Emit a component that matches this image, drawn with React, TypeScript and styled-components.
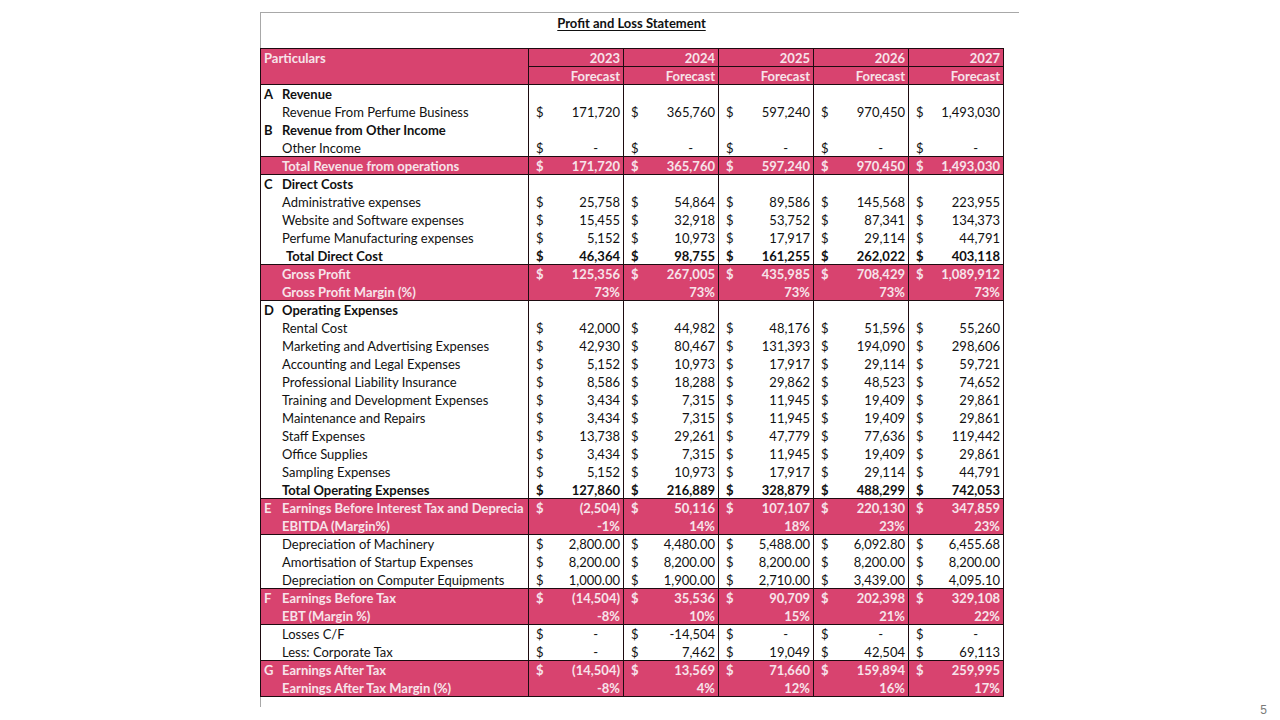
import * as React from "react";
import styled, { createGlobalStyle, css } from "styled-components";

const GlobalStyle = createGlobalStyle`
  html, body {
    margin: 0;
    padding: 0;
    background: #ffffff;
  }
  body {
    font-family: Lato, "Open Sans", "Liberation Sans", sans-serif;
    color: #111111;
  }
`;

const PINK = "#d8436f";
const PINK_TEXT = "#f7e3ea";
const LINE = "#1d0b10";

type Kind = "section" | "item" | "total" | "pink";

interface IRow {
  letter?: string;
  label: string;
  kind: Kind;
  values?: string[];
  dollar?: boolean;
  indent?: boolean;
  bandTop?: boolean;
  bandBottom?: boolean;
}

const YEARS = ["2023", "2024", "2025", "2026", "2027"];

const ROWS: IRow[] = [
  { letter: "A", label: "Revenue", kind: "section" },
  { label: "Revenue From Perfume Business", kind: "item", dollar: true, values: ["171,720", "365,760", "597,240", "970,450", "1,493,030"] },
  { letter: "B", label: "Revenue from Other Income", kind: "section" },
  { label: "Other Income", kind: "item", dollar: true, values: ["-", "-", "-", "-", "-"] },
  { label: "Total Revenue from operations", kind: "pink", dollar: true, bandTop: true, bandBottom: true, values: ["171,720", "365,760", "597,240", "970,450", "1,493,030"] },
  { letter: "C", label: "Direct Costs", kind: "section" },
  { label: "Administrative expenses", kind: "item", dollar: true, values: ["25,758", "54,864", "89,586", "145,568", "223,955"] },
  { label: "Website and Software expenses", kind: "item", dollar: true, values: ["15,455", "32,918", "53,752", "87,341", "134,373"] },
  { label: "Perfume Manufacturing expenses", kind: "item", dollar: true, values: ["5,152", "10,973", "17,917", "29,114", "44,791"] },
  { label: "Total Direct Cost", kind: "total", indent: true, dollar: true, values: ["46,364", "98,755", "161,255", "262,022", "403,118"] },
  { label: "Gross Profit", kind: "pink", dollar: true, bandTop: true, values: ["125,356", "267,005", "435,985", "708,429", "1,089,912"] },
  { label: "Gross Profit Margin (%)", kind: "pink", bandBottom: true, values: ["73%", "73%", "73%", "73%", "73%"] },
  { letter: "D", label: "Operating Expenses", kind: "section" },
  { label: "Rental Cost", kind: "item", dollar: true, values: ["42,000", "44,982", "48,176", "51,596", "55,260"] },
  { label: "Marketing and Advertising Expenses", kind: "item", dollar: true, values: ["42,930", "80,467", "131,393", "194,090", "298,606"] },
  { label: "Accounting and Legal Expenses", kind: "item", dollar: true, values: ["5,152", "10,973", "17,917", "29,114", "59,721"] },
  { label: "Professional Liability Insurance", kind: "item", dollar: true, values: ["8,586", "18,288", "29,862", "48,523", "74,652"] },
  { label: "Training and Development Expenses", kind: "item", dollar: true, values: ["3,434", "7,315", "11,945", "19,409", "29,861"] },
  { label: "Maintenance and Repairs", kind: "item", dollar: true, values: ["3,434", "7,315", "11,945", "19,409", "29,861"] },
  { label: "Staff Expenses", kind: "item", dollar: true, values: ["13,738", "29,261", "47,779", "77,636", "119,442"] },
  { label: "Office Supplies", kind: "item", dollar: true, values: ["3,434", "7,315", "11,945", "19,409", "29,861"] },
  { label: "Sampling Expenses", kind: "item", dollar: true, values: ["5,152", "10,973", "17,917", "29,114", "44,791"] },
  { label: "Total Operating Expenses", kind: "total", dollar: true, values: ["127,860", "216,889", "328,879", "488,299", "742,053"] },
  { letter: "E", label: "Earnings Before Interest Tax and Deprecia", kind: "pink", dollar: true, bandTop: true, values: ["(2,504)", "50,116", "107,107", "220,130", "347,859"] },
  { label: "EBITDA (Margin%)", kind: "pink", bandBottom: true, values: ["-1%", "14%", "18%", "23%", "23%"] },
  { label: "Depreciation of Machinery", kind: "item", dollar: true, values: ["2,800.00", "4,480.00", "5,488.00", "6,092.80", "6,455.68"] },
  { label: "Amortisation of Startup Expenses", kind: "item", dollar: true, values: ["8,200.00", "8,200.00", "8,200.00", "8,200.00", "8,200.00"] },
  { label: "Depreciation on Computer Equipments", kind: "item", dollar: true, values: ["1,000.00", "1,900.00", "2,710.00", "3,439.00", "4,095.10"] },
  { letter: "F", label: "Earnings Before Tax", kind: "pink", dollar: true, bandTop: true, values: ["(14,504)", "35,536", "90,709", "202,398", "329,108"] },
  { label: "EBT (Margin %)", kind: "pink", bandBottom: true, values: ["-8%", "10%", "15%", "21%", "22%"] },
  { label: "Losses C/F", kind: "item", dollar: true, values: ["-", "-14,504", "-", "-", "-"] },
  { label: "Less: Corporate Tax", kind: "item", dollar: true, values: ["-", "7,462", "19,049", "42,504", "69,113"] },
  { letter: "G", label: "Earnings After Tax", kind: "pink", dollar: true, bandTop: true, values: ["(14,504)", "13,569", "71,660", "159,894", "259,995"] },
  { label: "Earnings After Tax Margin (%)", kind: "pink", bandBottom: true, values: ["-8%", "4%", "12%", "16%", "17%"] }
];

const Page = styled.div`
  width: 1280px;
  height: 720px;
  display: grid;
  grid-template-columns: 260px 759px 1fr;
  overflow: hidden;
`;

const Frame = styled.div`
  grid-column: 2;
  margin-top: 12px;
  height: 695px;
  border-top: 1px solid #a8a8a8;
  border-left: 1px solid #a8a8a8;
  box-sizing: border-box;
`;

const TitleBar = styled.div`
  width: 743px;
  height: 35px;
  margin-left: -1px;
  box-sizing: border-box;
  text-align: center;
  line-height: 16px;
  padding-top: 1px;
`;

const Title = styled.span`
  font-size: 13px;
  font-weight: 700;
  text-decoration: underline;
  text-underline-offset: 2px;
  color: #111;
`;

const Sheet = styled.table`
  margin-left: -1px;
  width: 743px;
  border-collapse: collapse;
  table-layout: fixed;
  font-size: 13px;
`;

const Col = styled.col<{ $w: number }>`
  width: ${({ $w }) => $w}px;
`;

const HeadCell = styled.th<{ $left?: boolean }>`
  background: ${PINK};
  color: ${PINK_TEXT};
  font-weight: 700;
  height: 16px;
  line-height: 16px;
  padding: 1px 3px 0;
  text-align: ${({ $left }) => ($left ? "left" : "right")};
  vertical-align: top;
  border: 1px solid ${LINE};
  white-space: nowrap;
`;

const Tr = styled.tr<{ $band?: boolean; $top?: boolean; $bottom?: boolean }>`
  height: 18px;
  ${({ $band }) =>
    $band &&
    css`
      background: ${PINK};
      color: ${PINK_TEXT};
      font-weight: 700;
    `}
  & > td {
    ${({ $top }) => $top && css`border-top: 1px solid ${LINE};`}
    ${({ $bottom }) => $bottom && css`border-bottom: 1px solid ${LINE};`}
  }
`;

const LabelCell = styled.td`
  padding: 1px 0 0 3px;
  line-height: 16px;
  white-space: nowrap;
  overflow: hidden;
  border-left: 1px solid ${LINE};
  border-right: 1px solid ${LINE};
`;

const LabelInner = styled.div`
  display: flex;
  align-items: center;
`;

const Letter = styled.span`
  width: 18px;
  flex: none;
  font-weight: 700;
`;

const Label = styled.span<{ $bold?: boolean; $indent?: boolean }>`
  font-weight: ${({ $bold }) => ($bold ? 700 : "inherit")};
  padding-left: ${({ $indent }) => ($indent ? "4px" : "0")};
`;

const DataCell = styled.td<{ $bold?: boolean }>`
  padding: 1px 3px 0 7px;
  line-height: 16px;
  white-space: nowrap;
  font-weight: ${({ $bold }) => ($bold ? 700 : "inherit")};
  border-left: 1px solid ${LINE};
  border-right: 1px solid ${LINE};
`;

const Amount = styled.div`
  display: flex;
  justify-content: space-between;
`;

const Value = styled.span<{ $dash?: boolean }>`
  margin-left: auto;
  padding-right: ${({ $dash }) => ($dash ? "22px" : "0")};
`;

const PageNumber = styled.div`
  grid-column: 3;
  align-self: end;
  justify-self: end;
  padding: 0 13px 3px 0;
  font-family: "Liberation Sans", Arial, sans-serif;
  font-size: 12px;
  color: #7a7a7a;
`;

const SheetRow = ({ row }: { row: IRow }) => {
  const band = row.kind === "pink";
  const bold = row.kind === "section" || row.kind === "total";
  return (
    <Tr $band={band} $top={row.bandTop} $bottom={row.bandBottom}>
      <LabelCell>
        <LabelInner>
          <Letter>{row.letter ?? ""}</Letter>
          <Label $bold={bold} $indent={row.indent}>
            {row.label}
          </Label>
        </LabelInner>
      </LabelCell>
      {YEARS.map((y, i) => (
        <DataCell key={y} $bold={row.kind === "total"}>
          {row.values ? (
            <Amount>
              {row.dollar && <span>$</span>}
              <Value $dash={row.values[i] === "-"}>{row.values[i]}</Value>
            </Amount>
          ) : null}
        </DataCell>
      ))}
    </Tr>
  );
};

export default function App() {
  return (
    <>
      <GlobalStyle />
      <Page>
        <Frame>
          <TitleBar>
            <Title>Profit and Loss Statement</Title>
          </TitleBar>
          <Sheet>
            <colgroup>
              <Col $w={268} />
              {YEARS.map(y => (
                <Col key={y} $w={95} />
              ))}
            </colgroup>
            <thead>
              <tr>
                <HeadCell $left rowSpan={2}>
                  Particulars
                </HeadCell>
                {YEARS.map(y => (
                  <HeadCell key={y}>{y}</HeadCell>
                ))}
              </tr>
              <tr>
                {YEARS.map(y => (
                  <HeadCell key={y}>Forecast</HeadCell>
                ))}
              </tr>
            </thead>
            <tbody>
              {ROWS.map((row, i) => (
                <SheetRow key={i} row={row} />
              ))}
            </tbody>
          </Sheet>
        </Frame>
        <PageNumber>5</PageNumber>
      </Page>
    </>
  );
}
